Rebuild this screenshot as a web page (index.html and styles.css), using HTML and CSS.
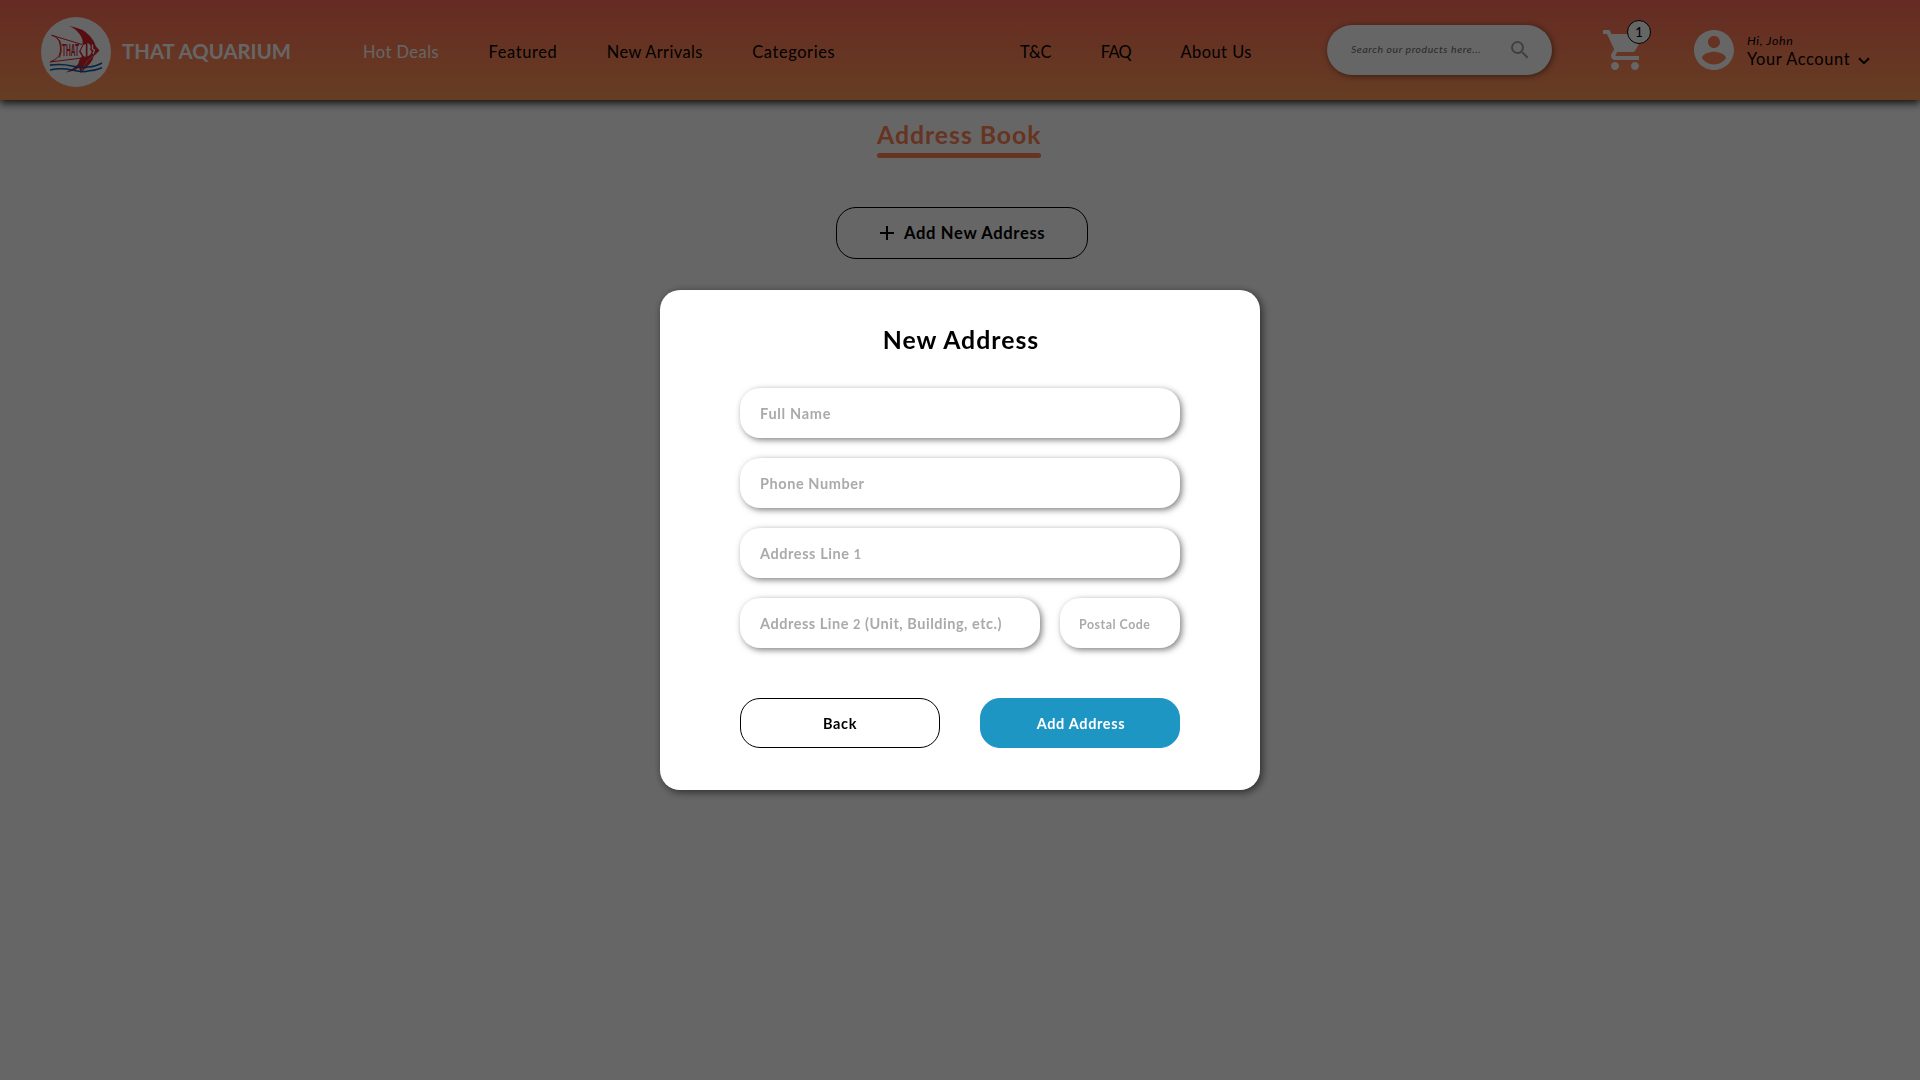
FILE: index.html
```html
<!DOCTYPE html>
<html lang="en">
<head>
<meta charset="utf-8">
<title>That Aquarium - Address Book</title>
<link rel="stylesheet" href="styles.css">
</head>
<body>
<header class="header">
  <a class="brand">
    <svg class="logo" viewBox="0 0 70 70" width="70" height="70">
      <circle cx="35" cy="35" r="35" fill="#fff"/>
      <g fill="none" stroke="#d8232f" stroke-width="1" stroke-linejoin="round">
        <path d="M10.500 18.200 L41 27.500 M10.500 18.200 Q18 20.500 19 27 Q20.500 35 17.500 39.500 Q14.500 43 9 45 L41 41"/>
        <path d="M15.500 20.500 Q19.500 23 20 28 Q21 35 18.500 40.500"/>
      </g>
      <text class="logo-text" x="21" y="38.500" textLength="17" lengthAdjust="spacingAndGlyphs">THAT</text>
      <g fill="#d8232f">
        <path d="M28 9 Q42 11 49 19 Q53.500 24 55 29.500 L58.500 33.500 L54 38 Q47 42 44.500 46.500 Q41 51.500 39.500 56.500 Q38.500 52 37.500 47 Q37.500 42.500 41 39.500 L38 34.500 L41.500 28 Q42.500 22.500 38.500 17 Q34.500 11.500 28 9 Z"/>
        <path d="M53 38.500 Q51 46 45 50.500 L40 56 Q43 48 47.500 43 Z"/>
        <path d="M43 47.500 Q35 54 24.500 55.500 Q34 51 38 46 Z"/>
      </g>
      <path d="M42.500 28 L44.800 27 L44.800 40 L42.500 39 L39.500 34 Z M46.500 26 Q51 27.500 49 32.500 L50.500 34 Q51 37 46.500 39.500 Z" fill="#fff"/>
      <path d="M51.500 27.500 L51.500 32 L53.500 33 L52 37" fill="none" stroke="#fff" stroke-width="1.300"/>
      <g fill="none" stroke="#0d5da9" stroke-width="1.700">
        <path d="M9 48.200 Q20 46.500 31 49 T47 50 Q55 49.500 61 46"/>
        <path d="M9 53 Q20 50.500 31 53 T47 54 Q55 53.500 61 50.800"/>
      </g>
    </svg>
    <span class="brand-name">THAT AQUARIUM</span>
  </a>
  <nav class="nav nav-shop">
    <a class="active">Hot Deals</a>
    <a class="loose">Featured</a>
    <a class="snug">New Arrivals</a>
    <a class="loose">Categories</a>
  </nav>
  <nav class="nav nav-info">
    <a class="tight">T&amp;C</a>
    <a class="tighter">FAQ</a>
    <a>About Us</a>
  </nav>
  <div class="search">
    <span class="search-hint">Search our products here...</span>
    <svg viewBox="0 0 24 24" width="24" height="24" fill="#a0a0a0"><path d="M15.500 14h-.79l-.28-.27A6.471 6.471 0 0 0 16 9.500 6.500 6.500 0 1 0 9.500 16c1.610 0 3.090-.59 4.230-1.570l.27.28v.79l5 4.990L20.490 19l-4.990-5zm-6 0C7.010 14 5 11.990 5 9.500S7.010 5 9.500 5 14 7.010 14 9.500 11.990 14 9.500 14z"/></svg>
  </div>
  <div class="cart">
    <svg viewBox="0 0 24 24" width="48" height="48" fill="#fff"><path d="M7 18c-1.100 0-1.990.9-1.990 2S5.900 22 7 22s2-.9 2-2-.9-2-2-2zM1 2v2h2l3.600 7.590-1.350 2.450c-.16.28-.25.61-.25.96 0 1.100.9 2 2 2h12v-2H7.420c-.14 0-.25-.11-.25-.25l.03-.12.9-1.630h7.450c.75 0 1.410-.41 1.750-1.030l3.580-6.490A1 1 0 0 0 20 4H5.210l-.94-2H1zm16 16c-1.100 0-1.990.9-1.990 2s.89 2 1.990 2 2-.9 2-2-.9-2-2-2z"/></svg>
    <span class="badge">1</span>
  </div>
  <div class="account">
    <svg viewBox="0 0 24 24" width="48" height="48" fill="#fff"><path d="M12 2C6.480 2 2 6.480 2 12s4.480 10 10 10 10-4.480 10-10S17.520 2 12 2zm0 3c1.660 0 3 1.340 3 3s-1.340 3-3 3-3-1.340-3-3 1.340-3 3-3zm0 14.200c-2.500 0-4.710-1.280-6-3.220.03-1.990 4-3.080 6-3.080 1.990 0 5.970 1.090 6 3.080-1.290 1.940-3.500 3.220-6 3.220z"/></svg>
    <div class="account-text">
      <span class="greeting">Hi, John</span>
      <span class="account-link">Your Account
        <svg viewBox="0 0 12 8" width="12" height="8"><path d="M1 1.200 L6 6.200 L11 1.200" fill="none" stroke="#000" stroke-width="2"/></svg>
      </span>
    </div>
  </div>
</header>
<main class="page">
  <h1 class="page-title">Address Book</h1>
  <button class="add-new">
    <svg viewBox="0 0 14 14" width="14" height="14"><path d="M7 0 V14 M0 7 H14" stroke="#000" stroke-width="2"/></svg>
    <span>Add New Address</span>
  </button>
</main>
<div class="overlay">
  <section class="modal">
    <h2 class="modal-title">New Address</h2>
    <div class="form">
      <div class="field f-name">Full Name</div>
      <div class="field">Phone Number</div>
      <div class="field">Address Line <span class="num">1</span></div>
      <div class="row">
        <div class="field f-unit">Address Line <span class="num">2</span> (Unit, Building, etc.)</div>
        <div class="field f-postal">Postal Code</div>
      </div>
    </div>
    <div class="actions">
      <button class="btn">Back</button>
      <button class="btn btn-primary">Add Address</button>
    </div>
  </section>
</div>
</body>
</html>
```
FILE: styles.css
```css
* { box-sizing: border-box; }
body {
  margin: 0;
  height: 1080px;
  overflow: hidden;
  background: #fff;
  color: #000;
  font-family: Lato, "Open Sans", sans-serif;
}
h1, h2 { margin: 0; }
svg { display: block; flex: none; }
button { font-family: inherit; color: #000; padding: 0; }

.header {
  display: flex;
  align-items: center;
  height: 100px;
  padding-left: 41px;
  background: linear-gradient(#ff6c58, #ff9958);
  box-shadow: 0 3px 8px rgba(0, 0, 0, .85);
}
.brand { display: flex; align-items: center; width: 322px; }
.logo { margin-top: 4px; }
.logo-text { font: 700 16px "Liberation Sans", sans-serif; fill: #d8232f; }
.brand-name {
  margin-left: 11px;
  padding-top: 1px;
  font-size: 20.3px;
  font-weight: 700;
  letter-spacing: .05px;
  color: #fff;
}
.nav {
  display: flex;
  gap: 49.5px;
  padding-top: 3px;
  font-size: 16.4px;
  line-height: 20px;
  letter-spacing: .5px;
  white-space: nowrap;
}
.nav-shop { width: 657px; }
.nav-info { width: 307px; }
.active { color: #fff; }
.loose { letter-spacing: .62px; }
.snug { letter-spacing: .38px; }
.tight { letter-spacing: -.2px; }
.tighter { letter-spacing: -.7px; }

.search {
  display: flex;
  align-items: center;
  justify-content: space-between;
  width: 225px;
  height: 50px;
  padding: 0 20px 0 24px;
  border-radius: 25px;
  background: #fff;
  box-shadow: 1px 1px 6px rgba(0, 0, 0, .5);
}
.search-hint {
  padding-bottom: 2px;
  font-size: 10.4px;
  font-style: italic;
  letter-spacing: .58px;
  color: #666;
  white-space: nowrap;
}
.cart { position: relative; margin-left: 49px; }
.badge {
  position: absolute;
  left: 26px;
  top: -6px;
  width: 24px;
  height: 24px;
  border: 1px solid #000;
  border-radius: 50%;
  background: #fff;
  font-size: 13px;
  font-weight: 500;
  line-height: 23px;
  text-align: center;
}
.account { display: flex; align-items: center; gap: 9px; margin-left: 41px; }
.account-text {
  display: flex;
  flex-direction: column;
  padding-top: 2px;
  white-space: nowrap;
}
.greeting { font-size: 12.4px; font-style: italic; line-height: 16px; letter-spacing: .65px; }
.account-link {
  display: flex;
  align-items: center;
  gap: 7.5px;
  font-size: 16.4px;
  line-height: 20px;
  letter-spacing: .62px;
}
.account-link svg { margin-top: 3px; }

.page { display: flex; flex-direction: column; align-items: center; padding-top: 20px; }
.page-title {
  width: 164px;
  height: 38px;
  margin-right: 2px;
  font-size: 24.8px;
  line-height: 30px;
  letter-spacing: .96px;
  color: #ff8250;
  white-space: nowrap;
}
.page-title::after {
  content: "";
  display: block;
  height: 5px;
  margin-top: 3px;
  border-radius: 2.5px;
  background: #ff8250;
}
.add-new {
  display: flex;
  align-items: center;
  gap: 10px;
  width: 252px;
  height: 52px;
  margin: 49px 0 0 4px;
  padding-left: 43px;
  border: 1px solid #000;
  border-radius: 20px;
  background: transparent;
  font-size: 16.6px;
  font-weight: 700;
  letter-spacing: .65px;
}

.overlay {
  position: fixed;
  inset: 0;
  display: flex;
  align-items: center;
  justify-content: center;
  background: rgba(0, 0, 0, .6);
}
.modal {
  width: 600px;
  height: 500px;
  padding: 35px 80px 0;
  border-radius: 20px;
  background: #fff;
  box-shadow: 2px 2px 8px rgba(0, 0, 0, .6);
}
.modal-title {
  padding-left: 2px;
  font-size: 24.8px;
  line-height: 30px;
  letter-spacing: 1px;
  text-align: center;
}
.form { display: flex; flex-direction: column; gap: 20px; margin-top: 33px; }
.row { display: grid; grid-template-columns: 300px 120px; gap: 20px; }
.field {
  height: 50px;
  padding-left: 20px;
  border-radius: 20px;
  background: #fff;
  box-shadow: 2px 2px 6px rgba(0, 0, 0, .5);
  font-size: 14.5px;
  font-weight: 700;
  line-height: 51px;
  letter-spacing: .57px;
  color: #aaa;
  white-space: nowrap;
}
.f-name { letter-spacing: .7px; }
.f-unit { letter-spacing: .52px; }
.f-postal { padding-left: 19px; font-size: 12.4px; letter-spacing: .52px; line-height: 53px; }
.num { font-size: .88em; }
.actions { display: flex; justify-content: space-between; margin-top: 50px; }
.btn {
  width: 200px;
  height: 50px;
  border: 1px solid #000;
  border-radius: 20px;
  background: #fff;
  font-size: 14.5px;
  font-weight: 700;
  letter-spacing: .65px;
}
.btn-primary { padding-left: 2px; border-color: #1e96c3; background: #1e96c3; color: #fff; }
```
